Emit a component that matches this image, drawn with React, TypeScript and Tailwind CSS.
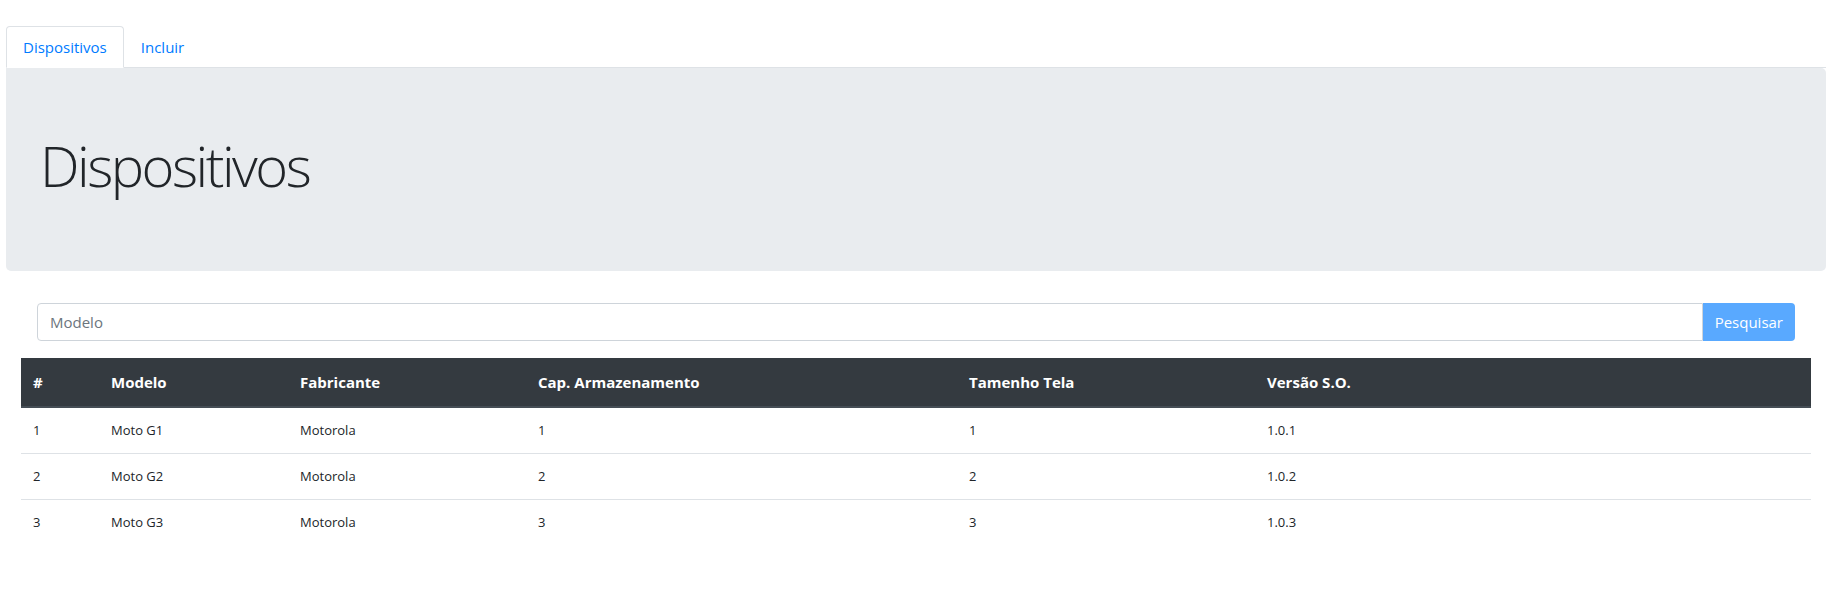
import React from "react";

const rows = [
  { id: 1, modelo: "Moto G1", fab: "Motorola", cap: "1", tela: "1", so: "1.0.1" },
  { id: 2, modelo: "Moto G2", fab: "Motorola", cap: "2", tela: "2", so: "1.0.2" },
  { id: 3, modelo: "Moto G3", fab: "Motorola", cap: "3", tela: "3", so: "1.0.3" },
];

export default function App() {
  return (
    <div
      className="w-full min-h-[609px] bg-white pt-[26px] text-[#212529]"
      style={{ fontFamily: '"Open Sans", "Noto Sans", Arial, sans-serif' }}
    >
      <div className="ml-[6px] mr-[13px]">
        <nav className="flex border-b border-[#dee2e6]">
          <a className="-mb-px block rounded-t-[4px] border border-[#dee2e6] border-b-white bg-white px-4 py-2 text-[15px] leading-6 text-[#007bff]">
            Dispositivos
          </a>
          <a className="-mb-px block rounded-t-[4px] border border-transparent px-4 py-2 text-[15px] leading-6 text-[#007bff]">
            Incluir
          </a>
        </nav>

        <div className="rounded-[5px] rounded-tl-none bg-[#e9ecef] px-[34px] py-16">
          <h1 className="mb-2 text-[56px] font-light leading-[1.2] tracking-[-2.5px] text-[#212529]">
            Dispositivos
          </h1>
        </div>

        <div className="mt-8 px-[15px]">
          <div className="mx-[16px] flex h-[38px]">
            <input
              className="h-full flex-1 rounded-l-[4px] border border-[#ced4da] px-3 text-[15px] text-[#495057] outline-none placeholder:text-[#6c757d]"
              placeholder="Modelo"
            />
            <button className="h-full rounded-r-[4px] bg-[#59a9ff] px-3 text-[15px] text-white">
              Pesquisar
            </button>
          </div>

          <table className="mt-[17px] w-full table-fixed border-collapse">
            <thead>
              <tr className="bg-[#343a40] text-white">
                <th className="w-[78px] border-b-2 border-[#454d55] p-3 text-left text-[15px] font-bold leading-6">#</th>
                <th className="w-[189px] border-b-2 border-[#454d55] p-3 text-left text-[15px] font-bold leading-6">Modelo</th>
                <th className="w-[238px] border-b-2 border-[#454d55] p-3 text-left text-[15px] font-bold leading-6">Fabricante</th>
                <th className="w-[431px] border-b-2 border-[#454d55] p-3 text-left text-[15px] font-bold leading-6">Cap. Armazenamento</th>
                <th className="w-[298px] border-b-2 border-[#454d55] p-3 text-left text-[15px] font-bold leading-6">Tamenho Tela</th>
                <th className="border-b-2 border-[#454d55] p-3 text-left text-[15px] font-bold leading-6">Versão S.O.</th>
              </tr>
            </thead>
            <tbody>
              {rows.map((r) => (
                <tr key={r.id} className="text-[13px] leading-[21px]">
                  <td className="border-t border-[#dee2e6] p-3">{r.id}</td>
                  <td className="border-t border-[#dee2e6] p-3">{r.modelo}</td>
                  <td className="border-t border-[#dee2e6] p-3">{r.fab}</td>
                  <td className="border-t border-[#dee2e6] p-3">{r.cap}</td>
                  <td className="border-t border-[#dee2e6] p-3">{r.tela}</td>
                  <td className="border-t border-[#dee2e6] p-3">{r.so}</td>
                </tr>
              ))}
            </tbody>
          </table>
        </div>
      </div>
    </div>
  );
}
